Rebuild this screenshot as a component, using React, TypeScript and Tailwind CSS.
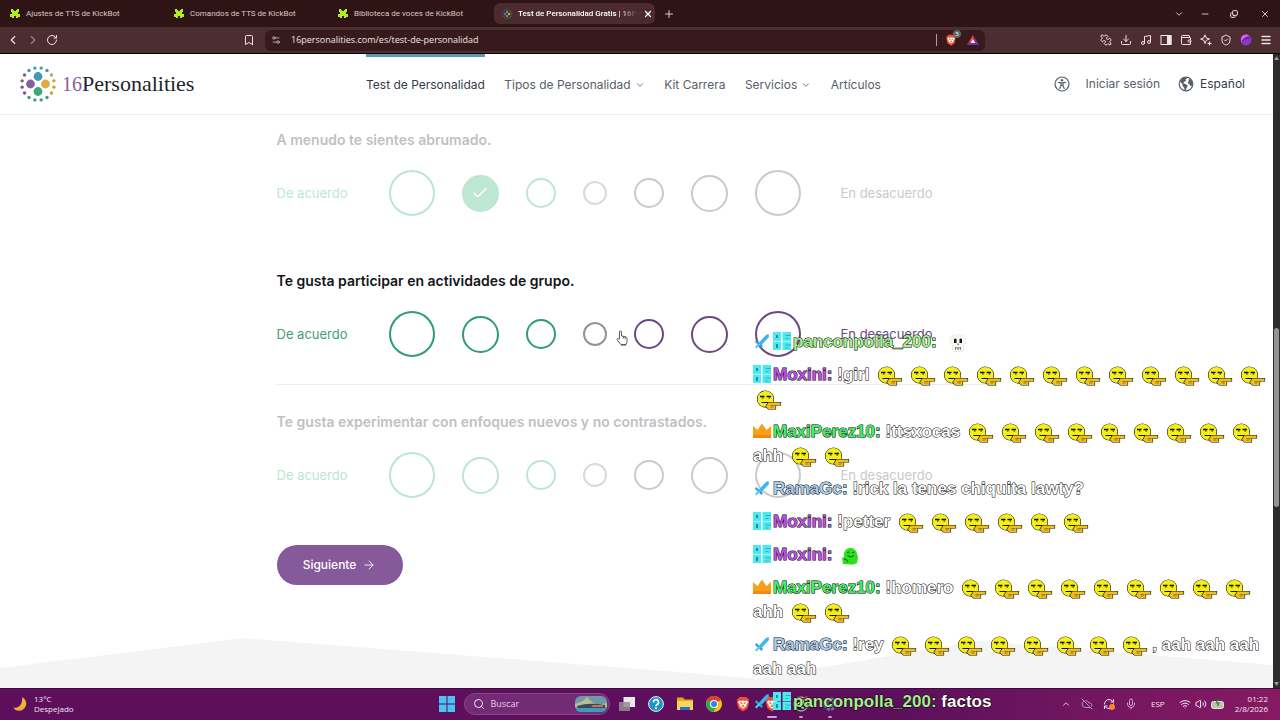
import React, { useState } from 'react';
import {
  ArrowRight,
  Bookmark,
  Check,
  ChevronDown,
  ChevronLeft,
  ChevronRight,
  ChevronUp,
  CloudOff,
  Copy,
  Download,
  Menu,
  Mic,
  Minus,
  Music,
  Plus,
  Puzzle,
  RefreshCw,
  RotateCw,
  Search,
  Settings2,
  ShieldCheck,
  Volume2,
  Wallet,
  Wifi,
  X,
} from 'lucide-react';

type Tone = 'agree' | 'neutral' | 'disagree';

interface Option {
  size: string;
  tone: Tone;
}

const OPTIONS: Option[] = [
  { size: 'size-[46px]', tone: 'agree' },
  { size: 'size-[37px]', tone: 'agree' },
  { size: 'size-[30px]', tone: 'agree' },
  { size: 'size-6', tone: 'neutral' },
  { size: 'size-[30px]', tone: 'disagree' },
  { size: 'size-[37px]', tone: 'disagree' },
  { size: 'size-[46px]', tone: 'disagree' },
];

const ACTIVE_TONES: Record<Tone, string> = {
  agree: 'border-[#2f9e6e] checked:bg-[#2f9e6e]',
  neutral: 'border-[#949494] checked:bg-[#949494]',
  disagree: 'border-[#6d4784] checked:bg-[#6d4784]',
};

const FADED_TONES: Record<Tone, string> = {
  agree: 'border-[#bde6d1] checked:bg-[#bfe8d4]',
  neutral: 'border-[#dadada] checked:bg-[#dadada]',
  disagree: 'border-[#cbc8ce] checked:bg-[#cbc8ce]',
};

/* ---------- browser chrome ---------- */

const KickBotIcon = () => (
  <svg viewBox="0 0 10 9" className="h-[9px] w-[10px] shrink-0" fill="#b5ec1c">
    <path d="M1 0h2v1h1v1h2V1h1V0h2v3H8v2h2v3H8v1H6V7H4v2H2V8H0V5h2V3H1z" />
  </svg>
);

const DotsLogo = ({ className }: { className: string }) => {
  const colors = ['#4298b4', '#4298b4', '#c2a43a', '#c2a43a', '#c2a43a', '#c2a43a', '#33a474', '#33a474',
    '#33a474', '#33a474', '#7a5790', '#7a5790', '#7a5790', '#7a5790', '#4298b4', '#4298b4'];
  return (
    <svg viewBox="0 0 36 36" className={className}>
      {colors.map((color, i) => {
        const angle = ((i + 0.5) * Math.PI) / 8;
        return <circle key={i} cx={18 + 16.2 * Math.sin(angle)} cy={18 - 16.2 * Math.cos(angle)} r="1.7" fill={color} />;
      })}
      <circle cx="18" cy="10.5" r="4.4" fill="#4298b4" />
      <circle cx="25.5" cy="18" r="4.4" fill="#dcad42" />
      <circle cx="18" cy="25.5" r="4.4" fill="#3aa878" />
      <circle cx="10.5" cy="18" r="4.4" fill="#88619a" />
    </svg>
  );
};

const BraveIcon = ({ className }: { className: string }) => (
  <svg viewBox="0 0 16 16" className={className}>
    <path d="M4.5 1h7L13 3l1.3.2-.5 2 .4 1.2-1.6 5.8L8 15.5l-4.6-3.3-1.6-5.8.4-1.2-.5-2L3 3z" fill="#f0502e" />
    <path d="m4 4.6 2.4.4L8 4.6l1.6.4 2.4-.4 1 1.8-1.8 2.4.4 1.2L8 12.8 4.4 10l.4-1.2L3 6.4z" fill="#fff" />
    <path d="m5 6.4 2 .5-.4 1zM11 6.4l-2 .5.4 1zM8 7v2.4M6.6 10 8 9.4l1.4.6L8 11z" fill="#f0502e" stroke="#f0502e" strokeWidth=".5" />
  </svg>
);

const TABS = ['Ajustes de TTS de KickBot', 'Comandos de TTS de KickBot', 'Biblioteca de voces de KickBot'];

const TabStrip = () => (
  <div className="flex h-[27px] shrink-0 items-center bg-[#2f1415] font-[Roboto,sans-serif] text-[8px] text-[#d8c8c6]">
    {TABS.map(tab => (
      <button key={tab} className="flex w-[164px] items-center gap-1.5 pl-2.5 text-left whitespace-nowrap">
        <KickBotIcon />
        {tab}
      </button>
    ))}
    <div className="ml-0.5 flex h-[21px] w-[161px] items-center gap-1.5 rounded-md bg-[#4b2b2d] pr-1.5 pl-2 text-white">
      <DotsLogo className="size-[10px] shrink-0" />
      <span className="flex-1 mask-r-from-85% font-medium whitespace-nowrap">Test de Personalidad Gratis | 16P</span>
      <button aria-label="Cerrar pestaña">
        <X className="size-2.5" strokeWidth={3} />
      </button>
    </div>
    <button aria-label="Nueva pestaña" className="ml-2">
      <Plus className="size-3" />
    </button>
    <div className="ml-auto flex items-center gap-4 pr-2.5 text-[#f0e4e4]">
      <button aria-label="Buscar pestañas"><ChevronDown className="size-2.5" /></button>
      <button aria-label="Minimizar"><Minus className="size-2.5" /></button>
      <button aria-label="Restaurar" className="ml-1"><Copy className="size-2 -scale-x-100 rotate-180" strokeWidth={3} /></button>
      <button aria-label="Cerrar" className="ml-1.5"><X className="size-2.5" /></button>
    </div>
  </div>
);

const Toolbar = () => (
  <div className="grid h-[27px] shrink-0 grid-cols-[265fr_720fr_295fr] items-center border-b border-black bg-[#4d2e30] text-[#f1e3e3]">
    <div className="flex items-center gap-1.5 pr-2.5 pl-1.5">
      <button aria-label="Atrás"><ChevronLeft className="size-3.5" /></button>
      <button aria-label="Adelante" className="text-[#9c8182]"><ChevronRight className="size-3.5" /></button>
      <button aria-label="Recargar"><RotateCw className="size-3" /></button>
      <button aria-label="Añadir marcador" className="ml-auto"><Bookmark className="size-3" /></button>
    </div>
    <div className="flex h-[21px] items-center gap-2.5 rounded-md bg-[#371b1c] px-1.5">
      <Settings2 className="size-2.5 text-[#cbb9b9]" />
      <input
        aria-label="Dirección"
        defaultValue="16personalities.com/es/test-de-personalidad"
        className="flex-1 bg-transparent text-[9px] outline-none"
      />
      <div className="flex items-center gap-2">
        <span className="h-3 w-px bg-[#b39c9c]" />
        <span className="relative">
          <BraveIcon className="size-3" />
          <span className="absolute -top-1 -right-1 flex size-2 items-center justify-center rounded-full bg-[#5c6668] text-[6px] text-white">3</span>
        </span>
        <svg viewBox="0 0 12 12" className="ml-0.5 size-3">
          <path d="M6 1 12 11H8.8L6 6z" fill="#9a1f97" />
          <path d="M6 1 0 11h3L6 6z" fill="#ff4a21" />
          <path d="M0 11h12L9.5 8h-7z" fill="#7a2bb0" />
          <path d="m6 5 2.4 4H3.6z" fill="#fff" />
        </svg>
      </div>
    </div>
    <div className="flex items-center justify-end gap-2 pr-2">
      <button aria-label="Extensiones"><Puzzle className="size-3 -scale-x-100" /></button>
      <button aria-label="Descargas"><Download className="size-3" /></button>
      <button aria-label="Multimedia"><Music className="size-3" /></button>
      <button aria-label="Panel lateral">
        <svg viewBox="0 0 12 12" className="size-3" fill="none" stroke="currentColor">
          <rect x="1" y="1.5" width="10" height="9" />
          <path d="M7.5 1.5H11v9H7.5z" fill="currentColor" />
        </svg>
      </button>
      <button aria-label="Cartera"><Wallet className="size-3" /></button>
      <button aria-label="Leo">
        <svg viewBox="0 0 12 12" className="size-3" fill="none" stroke="currentColor" strokeLinejoin="round">
          <path d="M5 .8 6.3 4 9.500 5 6.3 6.200 5 9.500 3.700 6.200.6 5 3.700 4z" />
          <path d="M9.500 7.500v4M7.500 9.500h4" strokeWidth="1.2" />
        </svg>
      </button>
      <button aria-label="VPN"><ShieldCheck className="size-3" /></button>
      <button aria-label="Perfil">
        <svg viewBox="0 0 12 12" className="size-3">
          <circle cx="6" cy="6" r="5.500" fill="#8a35c8" />
          <path d="M1 6a5 5 0 0 1 8-4.500Q4 3 1 8z" fill="#e062e6" />
          <path d="M2 7q3-4 8-3" stroke="#4a147e" fill="none" />
        </svg>
      </button>
      <button aria-label="Menú"><Menu className="size-3" strokeWidth={3} /></button>
    </div>
  </div>
);

/* ---------- page ---------- */

const NavLink = ({ label, menu, active }: { label: string; menu?: boolean; active?: boolean }) => (
  <a
    href="#"
    className={`flex h-full items-center gap-1 border-t-[3px] ${active ? 'border-[#5a9cae] text-[#343c4b]' : 'border-transparent'}`}
  >
    {label}
    {menu && <ChevronDown className="size-2.5" />}
  </a>
);

const SiteHeader = () => (
  <header className="grid h-[61px] shrink-0 grid-cols-[366fr_515fr_392fr] items-center border-b border-[#eeeeef] bg-white text-[12px] text-[#575e6a]">
    <a href="#" className="flex items-center gap-1.5 pl-5 font-['Liberation_Serif',serif] leading-6">
      <DotsLogo className="size-9" />
      <span className="flex items-baseline">
        <span className="text-[20px] text-[#88619a]">16</span>
        <span className="text-[22px] text-[#20242e]">Personalities</span>
      </span>
    </a>
    <nav className="flex h-full items-center justify-between pb-0.5 whitespace-nowrap">
      <NavLink label="Test de Personalidad" active />
      <NavLink label="Tipos de Personalidad" menu />
      <NavLink label="Kit Carrera" />
      <NavLink label="Servicios" menu />
      <NavLink label="Artículos" />
    </nav>
    <div className="flex items-center justify-end pr-7">
      <button aria-label="Accesibilidad" className="mr-4">
        <svg viewBox="0 0 16 16" className="size-4" fill="none" stroke="currentColor">
          <circle cx="8" cy="8" r="7" strokeWidth="1.2" />
          <circle cx="8" cy="4.3" r="1.2" fill="currentColor" stroke="none" />
          <path d="m4.5 6.3 2.5.6h2l2.500-.6M7 7v2.500L5.800 12.500M9 7v2.500l1.200 3M7 9.500h2" strokeWidth="1.2" strokeLinecap="round" />
        </svg>
      </button>
      <a href="#" className="mr-[18px]">Iniciar sesión</a>
      <button className="flex items-center gap-1.5 text-[#343c4b]">
        <svg viewBox="0 0 16 16" className="size-4">
          <circle cx="8" cy="8" r="6.8" fill="none" stroke="#575e6a" strokeWidth="1.2" />
          <path d="M2 5.500C3 3 5.500 1.200 8 1.200l1 1.300-1.500 1 .5 1.300L6 6l-.5 1.500 2.500.7 1.800 1.600-1.300 2.200-.8 2.400-1.200-.2-.3-2.700-1.700-1.500.2-1.500zM11 3l2 .6 1.500 3-.3 3-1.700.4-1.300-2-1.300-.6.5-2z" fill="#575e6a" />
        </svg>
        Español
      </button>
    </div>
  </header>
);

const HandCursor = () => (
  <svg viewBox="0 0 12 16" className="absolute top-2 left-[33px] h-4 w-3" fill="#fff" stroke="#333" strokeWidth=".8">
    <path d="M3.500 9V2a1 1 0 0 1 2 0v4l4 .7c1 .3 1.500 1 1.500 2v3l-1 3H5L2 11 1 9.500c0-1 1-1.200 1.600-.6z" />
    <path d="M7.300 6.500v2M9.200 7v2M5 15h5" />
  </svg>
);

interface QuestionProps {
  id: string;
  text: string;
  active?: boolean;
  initial?: number;
}

const Question: React.FC<QuestionProps> = ({ id, text, active, initial }) => {
  const [answer, setAnswer] = useState<number | undefined>(initial);
  const tones = active ? ACTIVE_TONES : FADED_TONES;

  return (
    <fieldset className={`border-b pb-[27px] ${active ? 'border-[#ececee]' : 'border-transparent'}`}>
      <legend className={`mb-5 text-[14px] leading-5 font-semibold ${active ? 'text-[#14161c]' : 'text-[#bfc1c4]'}`}>{text}</legend>
      <div className="flex items-center gap-10 text-[13px] leading-5">
        <span className={`w-[72px] whitespace-nowrap ${active ? 'text-[#3f9f75]' : 'text-[#bce6d1]'}`}>De acuerdo</span>
        <div className="flex items-center gap-[27px]">
          {OPTIONS.map((option, i) => (
            <label key={i} className="relative flex">
              <input
                type="radio"
                name={id}
                aria-label={`${text} ${i + 1}`}
                checked={answer === i}
                onChange={() => setAnswer(i)}
                className={`appearance-none rounded-full border-2 ${option.size} ${tones[option.tone]}`}
              />
              {answer === i && <Check className="absolute inset-0 m-auto size-[18px] text-white" strokeWidth={2} />}
              {active && i === 3 && <HandCursor />}
            </label>
          ))}
        </div>
        <span className={active ? 'text-[#6d4784]' : 'text-[#cbc8ce]'}>En desacuerdo</span>
      </div>
    </fieldset>
  );
};

const Scrollbar = () => (
  <div className="flex w-[7px] shrink-0 flex-col items-center bg-[#2c2c2c]">
    <span className="h-2 text-[5px] leading-2 text-[#9d9d9d]">▲</span>
    <div className="flex-[266]" />
    <div className="w-[5px] flex-[179] rounded-full bg-[#939393]" />
    <div className="flex-[173]" />
    <span className="h-2 text-[5px] leading-2 text-[#9d9d9d]">▼</span>
  </div>
);

const Page = () => (
  <div className="flex min-h-0 flex-1 bg-white">
    <div className="relative flex min-w-0 flex-1 flex-col overflow-hidden">
      <svg viewBox="0 0 1273 50" preserveAspectRatio="none" className="absolute bottom-0 left-0 h-[50px] w-full" fill="#f4f4f4">
        <path d="M0 30 235 1q10-1 20 0L690 35l65 6 215-37q12-2 24 0l279 23v23H0z" />
      </svg>
      <SiteHeader />
      <main className="relative mx-auto flex w-[720px] max-w-full flex-col gap-[27px] pt-[15px]">
        <Question id="q1" text="A menudo te sientes abrumado." initial={1} />
        <Question id="q2" text="Te gusta participar en actividades de grupo." active />
        <Question id="q3" text="Te gusta experimentar con enfoques nuevos y no contrastados." />
        <button className="-mt-2 flex h-10 w-[126px] items-center justify-center gap-1.5 rounded-full bg-[#85599a] text-[12px] font-medium text-white">
          Siguiente
          <ArrowRight className="size-3.5" strokeWidth={1.5} />
        </button>
      </main>
    </div>
    <Scrollbar />
  </div>
);

/* ---------- taskbar ---------- */

const WindowsIcon = () => (
  <svg viewBox="0 0 16 16" className="size-4" fill="#4cc2f5">
    <path d="M0 0h7.500v7.500H0zM8.500 0H16v7.500H8.500zM0 8.500h7.500V16H0zM8.500 8.500H16V16H8.500z" />
  </svg>
);

const Taskbar = () => (
  <footer className="flex h-8 shrink-0 items-center border-t border-[#3d0a40] bg-linear-to-r from-[#5d0f5c] from-70% to-[#861a62] pb-0.5 text-[8px] leading-[10px] text-[#f3e6f3]">
    <div className="flex flex-1 items-center gap-1.5 pl-3">
      <svg viewBox="0 0 16 16" className="size-4">
        <path d="M10 1a7.200 7.200 0 1 1-9 10.500c5 1.500 10-3 9-10.500z" fill="#f2ae38" />
      </svg>
      <div>
        13°C
        <br />
        Despejado
      </div>
    </div>
    <div className="flex items-center gap-[13px] pr-1">
      <button aria-label="Inicio" className="mr-[-4px]"><WindowsIcon /></button>
      <label className="flex h-[22px] w-[146px] items-center gap-1.5 rounded-full border border-[#85468a] bg-[#742b76] pr-0.5 pl-2">
        <Search className="size-3" />
        <input placeholder="Buscar" aria-label="Buscar" className="w-0 flex-1 bg-transparent text-[9px] placeholder:text-[#e5cfe5]" />
        <svg viewBox="0 0 32 16" className="h-4 w-8">
          <rect width="32" height="16" rx="6" fill="#6d9aa6" />
          <path d="M0 8 8 5l4-4 5 5 6 3 9-2v4H0z" fill="#b9bd94" />
          <path d="M2 10q12-4 28-1v3H3z" fill="#37495b" />
          <path d="M1 12h30q-2 4-6 4H6q-4 0-5-4z" fill="#3f9bbd" />
          <path d="M18 9h10v2H16z" fill="#c4774b" />
        </svg>
      </label>
      <button aria-label="Vista de tareas" className="ml-[-4px]">
        <svg viewBox="0 0 16 16" className="size-4">
          <path d="M4.500 1H16v10H4.500z" fill="#ece9ec" />
          <path d="M0 6h11v9H0z" fill="#958b96" opacity=".85" />
        </svg>
      </button>
      <button aria-label="Ayuda">
        <svg viewBox="0 0 16 16" className="size-4">
          <circle cx="8" cy="8" r="7.400" fill="#1d93c7" stroke="#e6f5fb" />
          <path d="M5.500 6.500a2.500 2.500 0 1 1 3.500 2Q8 9 8 10.300" fill="none" stroke="#fff" strokeWidth="1.700" />
          <circle cx="8" cy="12.300" r="1" fill="#fff" />
        </svg>
      </button>
      <button aria-label="Explorador">
        <svg viewBox="0 0 16 16" className="size-4">
          <path d="M0 1.500h6l1.500 2H16V14H0z" fill="#e5a81b" />
          <path d="M0 5h16v9H0z" fill="#fbd55b" />
          <path d="M3 14v-3h10v3z" fill="#1b79c4" />
        </svg>
      </button>
      <button aria-label="Chrome">
        <svg viewBox="0 0 16 16" className="size-4">
          <circle cx="8" cy="8" r="8" fill="#fbc116" />
          <path d="M8 8 1 4a8 8 0 0 1 14 0z" fill="#e33b2e" />
          <path d="M8 8 1 4a8 8 0 0 0 6.500 12L11 10z" fill="#2da94f" />
          <circle cx="8" cy="8" r="4" fill="#fff" />
          <circle cx="8" cy="8" r="3" fill="#3f7de8" />
        </svg>
      </button>
      <button aria-label="Brave"><BraveIcon className="size-4" /></button>
      <button aria-label="Brave Nightly" className="relative flex justify-center">
        <BraveIcon className="size-4" />
        <span className="absolute -bottom-1.5 h-0.5 w-2.5 rounded-full bg-[#d99be0]" />
      </button>
      <button aria-label="OBS" className="relative flex justify-center">
        <svg viewBox="0 0 16 16" className="size-4">
          <circle cx="8" cy="8" r="7" fill="#26232b" stroke="#d8cfda" />
          <path d="M8 3a3 3 0 0 1 2 5M4 10a3 3 0 0 1 4-3M11 12a3 3 0 0 1-3-4" fill="none" stroke="#d8cfda" strokeWidth="1.500" />
          <circle cx="13.500" cy="2.500" r="2.500" fill="#e0202c" />
        </svg>
        <span className="absolute -bottom-1.5 h-0.5 w-1 rounded-full bg-[#c795cc]" />
      </button>
      <button aria-label="Ajustes" className="relative flex justify-center">
        <svg viewBox="0 0 16 16" className="size-4" fill="none" stroke="#6f79b0">
          <circle cx="8" cy="8" r="5.500" strokeWidth="2.500" strokeDasharray="3 1.300" />
          <circle cx="8" cy="8" r="3" />
        </svg>
        <span className="absolute -bottom-1.5 h-0.5 w-1 rounded-full bg-[#c795cc]" />
      </button>
    </div>
    <div className="flex flex-1 items-center justify-end gap-2.5 pr-3">
      <ChevronUp className="size-2.5" />
      <CloudOff className="size-3 text-[#b795b9]" />
      <span className="relative">
        <RefreshCw className="size-3" />
        <span className="absolute right-0 bottom-0 size-1.5 rounded-full bg-[#f58a2c]" />
      </span>
      <Mic className="size-3 text-[#d0a5cf]" />
      <span className="mx-1">ESP</span>
      <div className="flex items-center gap-1">
        <Wifi className="size-3" />
        <Volume2 className="size-3" />
        <svg viewBox="0 0 14 10" className="h-2.5 w-3.5">
          <rect x=".5" y="2.500" width="12" height="7" rx="2" fill="#b7c8a6" stroke="#e9e3ea" />
          <path d="M7 0 5.500 4H8L6.500 7" stroke="#2f7d32" fill="none" strokeWidth="1.200" />
        </svg>
      </div>
      <div className="text-right">
        01:22
        <br />
        2/8/2026
      </div>
    </div>
  </footer>
);

/* ---------- chat overlay ---------- */

type BadgeName = 'sword' | 'og' | 'crown';

const Badge = ({ name }: { name: BadgeName }) => (
  <svg viewBox="0 0 18 18" className="mr-0.5 inline-block size-[18px] align-[-3px]">
    {name === 'sword' && (
      <>
        <path d="M15.500 2 16 5 8.500 13 6 10.500 13 3z" fill="#36b8ea" />
        <path d="m3 8 7 6-1.500 2L2 10z" fill="#2aa3dc" />
        <path d="m6 11-4 4 1.500 1.500 4-4z" fill="#57c9f2" />
      </>
    )}
    {name === 'og' && (
      <>
        <path d="M0 0h8v9H0zM9.500 0H18v9H9.500zM0 9.500h8V18H0zM9.500 9.500H18V18H9.500z" fill="#4ceaee" />
        <path d="M3 3h2v3H3zM3 12h2v4H3z" fill="#1c8fa0" />
        <path d="M12.500 3H18v1h-5.500zM12.500 6h3v1h-3zM12.500 12.500H18v1h-5.500zM12.500 15.500h3v1h-3z" fill="#2cb4c4" />
      </>
    )}
    {name === 'crown' && (
      <>
        <path d="M0 4 4.500 8 9 1.500 13.500 8 18 4v12H0z" fill="#f9a01b" />
        <path d="M0 13h18v3H0z" fill="#f5860f" />
      </>
    )}
  </svg>
);

const PointEmote = () => (
  <svg viewBox="1 0 24 20" className="inline-block h-5 w-[33px] align-[-6px]">
    <circle cx="9" cy="9" r="8" fill="#f4ee1a" stroke="#15150a" strokeWidth="1.200" />
    <path d="M3.500 6.500H8M10 6.500h4.500" stroke="#15150a" strokeWidth="1.500" />
    <path d="M5.500 8h1.500M12 8h1.500M5 12.500h7" stroke="#15150a" strokeWidth="1.200" />
    <path d="M12 12.500h12V15h-5v4h-7l-2.500-2.500z" fill="#ecc01e" stroke="#15150a" strokeWidth="1.200" />
    <path d="M14 15.500h4M14 17h3" stroke="#8a5a0c" strokeWidth=".7" />
  </svg>
);

const SkullEmote = () => (
  <svg viewBox="0 0 18 18" className="ml-2 inline-block size-[18px] align-[-5px]">
    <path d="M2 4q1-3 7-3t7 3v6l-2 2v5H4v-5l-2-2z" fill="#f7f9f4" stroke="#bccbbd" strokeWidth=".6" />
    <path d="M5 5q1.500-1 2.500 0v4H5zM10.500 5q1.500-1 2.500 0v4h-2.500z" fill="#15191a" />
    <path d="M8.500 9.500h1V11h-1z" fill="#35383a" />
    <path d="M6 14h6M6.500 13v3M9 13v3M11.500 13v3" stroke="#67706a" strokeWidth=".8" />
  </svg>
);

const HugEmote = () => (
  <svg viewBox="0 0 18 18" className="ml-1 inline-block size-[18px] align-[-5px]">
    <path d="M3 6q2-5.500 7-5t6 6l1 3-1 6q-3 2-7 1.500L2 17l-1-6 2-1z" fill="#2be01f" />
    <path d="M6 6q1-2 2.500 0M11 6q1-2 2.500 0M6.500 8.500q3.500 3 6.500 0M3 12q3 0 4 3" fill="none" stroke="#0d5c10" />
  </svg>
);

interface ChatMessage {
  id: number;
  badges: BadgeName[];
  user: string;
  color: string;
  text?: string;
  emotes?: number;
  tail?: string;
  tailEmotes?: number;
  special?: React.ReactNode;
}

const MESSAGES: ChatMessage[] = [
  { id: 1, badges: ['sword', 'og'], user: 'panconpolla_200', color: 'text-[#a4f08a]', special: <SkullEmote /> },
  { id: 2, badges: ['og'], user: 'Moxini', color: 'text-[#bb4fe0]', text: '!girl', emotes: 13 },
  { id: 3, badges: ['crown'], user: 'MaxiPerez10', color: 'text-[#43ee62]', text: '!ttsxocas', emotes: 9, tail: 'ahh', tailEmotes: 2 },
  { id: 4, badges: ['sword'], user: 'RamaGc', color: 'text-[#a8cbee]', text: '!rick la tenes chiquita lawty?' },
  { id: 5, badges: ['og'], user: 'Moxini', color: 'text-[#bb4fe0]', text: '!petter', emotes: 6 },
  { id: 6, badges: ['og'], user: 'Moxini', color: 'text-[#bb4fe0]', special: <HugEmote /> },
  { id: 7, badges: ['crown'], user: 'MaxiPerez10', color: 'text-[#43ee62]', text: '!homero', emotes: 9, tail: 'ahh', tailEmotes: 2 },
  { id: 8, badges: ['sword'], user: 'RamaGc', color: 'text-[#a8cbee]', text: '!rey', emotes: 8, tail: ', aah aah aah aah aah' },
  { id: 9, badges: ['sword', 'og'], user: 'panconpolla_200', color: 'text-[#a4f08a]', text: 'factos' },
];

const Emotes = ({ count = 0 }: { count?: number }) => (
  <>
    {Array.from({ length: count }, (_, i) => (
      <PointEmote key={i} />
    ))}
  </>
);

const ChatOverlay = () => (
  <ul className="absolute right-[9px] bottom-1.5 flex w-[518px] flex-col gap-[9px] font-['Liberation_Sans',Arial,sans-serif] text-[17px] leading-6 font-bold text-white [-webkit-text-stroke:1px_#000] [paint-order:stroke_fill]">
    {MESSAGES.map(message => (
      <li key={message.id}>
        {message.badges.map(badge => (
          <Badge key={badge} name={badge} />
        ))}
        <span className={message.color}>{message.user}:</span> {message.text} <Emotes count={message.emotes} />
        {message.special}
        {message.tail} <Emotes count={message.tailEmotes} />
      </li>
    ))}
  </ul>
);

const App: React.FC = () => (
  <div className="relative flex h-screen flex-col overflow-hidden font-[Inter,sans-serif]">
    <div className="shrink-0 font-['Open_Sans',sans-serif]">
      <TabStrip />
      <Toolbar />
    </div>
    <Page />
    <div className="shrink-0 font-['Open_Sans',sans-serif]">
      <Taskbar />
    </div>
    <ChatOverlay />
  </div>
);

export default App;
